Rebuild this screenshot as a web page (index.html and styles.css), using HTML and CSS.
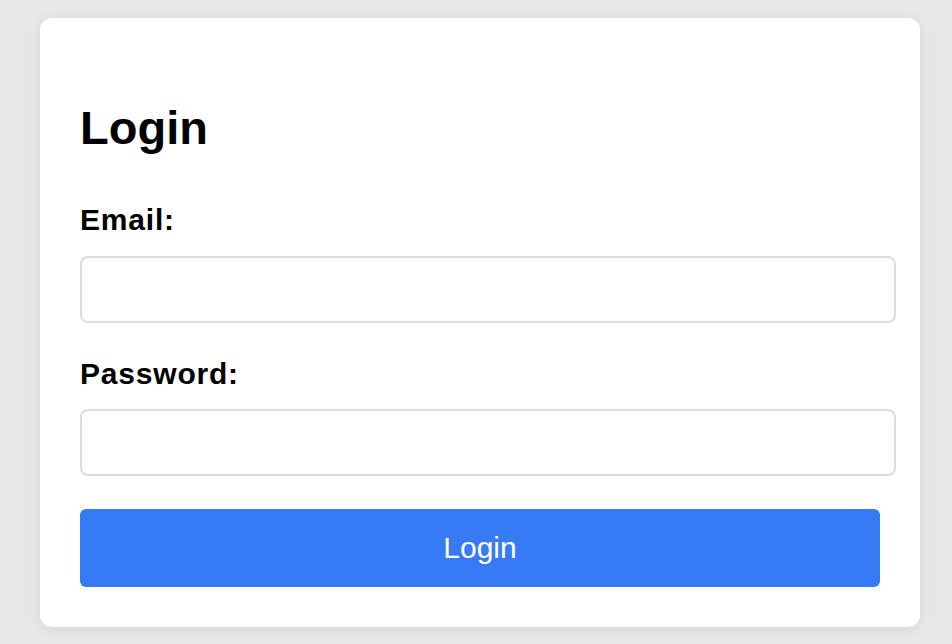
FILE: index.html
```html
<!DOCTYPE html>
<html lang="en">
<head>
<meta charset="utf-8">
<title>Login</title>
<link rel="stylesheet" href="styles.css">
</head>
<body>
  <div class="card">
    <h1 class="title">Login</h1>
    <form class="form">
      <label class="label" for="email">Email:</label>
      <input class="field" id="email" type="email">
      <label class="label" for="password">Password:</label>
      <input class="field" id="password" type="password">
      <button class="btn" type="button">Login</button>
    </form>
  </div>
</body>
</html>
```

FILE: styles.css
```css
html, body {
  margin: 0;
  padding: 0;
}
body {
  background: #e7e7e9;
  font-family: "Liberation Sans", Arial, sans-serif;
  color: #000;
  padding: 18px 32px 0 40px;
  height: 644px;
  box-sizing: border-box;
  overflow: hidden;
}
.card {
  background: #fff;
  border-radius: 12px;
  box-shadow: 0 2px 12px rgba(0, 0, 0, 0.08);
  padding: 83px 40px 40px 40px;
}
.title {
  margin: 0;
  font-size: 47px;
  font-weight: bold;
  line-height: 54px;
}
.form {
  display: flex;
  flex-direction: column;
  align-items: flex-start;
  margin-top: 48px;
}
.label {
  display: block;
  font-size: 30px;
  font-weight: bold;
  letter-spacing: 0.8px;
  line-height: 34.5px;
  margin-bottom: 18px;
}
.field {
  display: block;
  width: 100%;
  box-sizing: content-box;
  height: 63px;
  padding: 0 5px 0 7px;
  border: 2px solid #dcdcdc;
  border-radius: 8px;
  margin: 0 0 34px 0;
  font-size: 24px;
  font-family: inherit;
  background: #fff;
}
.form .field:last-of-type {
  margin-bottom: 33px;
}
.btn {
  width: 100%;
  height: 78px;
  border: none;
  border-radius: 6px;
  background: #367bf5;
  color: #fff;
  font-family: "Liberation Sans", Arial, sans-serif;
  font-size: 30px;
  font-weight: normal;
  padding: 0;
}
```
